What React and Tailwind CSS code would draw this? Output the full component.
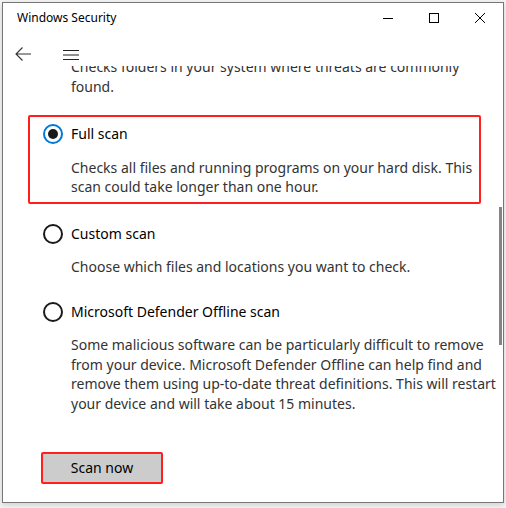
import React from "react";

const Radio = ({ checked }) => (
  <span
    className={
      checked
        ? "flex h-[20px] w-[20px] shrink-0 items-center justify-center rounded-full border-2 border-[#0078d7] bg-white"
        : "flex h-[20px] w-[20px] shrink-0 items-center justify-center rounded-full border-2 border-[#1a1a1a] bg-white"
    }
  >
    {checked && <span className="h-[10px] w-[10px] rounded-full bg-[#1a1a1a]" />}
  </span>
);

const Option = ({ checked, label, children }) => (
  <div>
    <div className="flex h-[20px] items-center gap-[8px]">
      <Radio checked={checked} />
      <span className="text-black">{label}</span>
    </div>
    <p className="mt-[13.5px] pl-[28px] whitespace-nowrap text-[#333]">{children}</p>
  </div>
);

export default function App() {
  return (
    <div
      className="h-[508px] w-[506px] bg-[#f4f4f4] px-[2px] pt-[2px] text-[14px] leading-[19.5px]"
      style={{ fontFamily: '"Segoe UI", "Noto Sans", sans-serif' }}
    >
      <div className="flex h-[501px] flex-col border border-[#767676] bg-white shadow-[0_2px_6px_rgba(0,0,0,0.15)]">
        {/* title bar */}
        <div className="flex h-[30px] items-center">
          <span className="pl-[14px] text-[12px] text-black">Windows Security</span>
          <div className="ml-auto flex h-full">
            <div className="flex w-[46px] items-center justify-center">
              <svg width="10" height="10" viewBox="0 0 10 10">
                <path d="M0 5.5H10" stroke="#000" strokeWidth="1" />
              </svg>
            </div>
            <div className="flex w-[46px] items-center justify-center">
              <svg width="10" height="10" viewBox="0 0 10 10">
                <rect x="0.5" y="0.5" width="9" height="9" fill="none" stroke="#000" strokeWidth="1" />
              </svg>
            </div>
            <div className="flex w-[46px] items-center justify-center">
              <svg width="10" height="10" viewBox="0 0 10 10">
                <path d="M0 0L10 10M10 0L0 10" stroke="#000" strokeWidth="1" />
              </svg>
            </div>
          </div>
        </div>

        {/* nav */}
        <div className="flex h-[33px] shrink-0 items-start gap-[32px] pl-[12px] pt-[14px]">
          <svg width="16" height="14" viewBox="0 0 16 14">
            <path d="M16 7H1M7.5 0.5L1 7L7.5 13.5" fill="none" stroke="#333" strokeWidth="1.1" />
          </svg>
          <svg width="16" height="12" viewBox="0 0 16 12" className="mt-[1px]">
            <path d="M0 2.5H16M0 7H16M0 11.5H16" stroke="#222" strokeWidth="1.1" />
          </svg>
        </div>

        {/* scrolled content */}
        <div className="relative flex-1 overflow-hidden">
          <div className="mt-[-9px] pl-[25px]">
            <p className="pl-[43px] whitespace-nowrap text-[#333]">
              Checks folders in your system where threats are commonly
              <br />
              found.
            </p>

            <div className="mt-[19px] ml-[0px] w-[453px] rounded-[2px] border-2 border-[#ff1f1f] pt-[7px] pb-[5px] pl-[13px]">
              <Option checked label="Full scan">
                Checks all files and running programs on your hard disk. This
                <br />
                scan could take longer than one hour.
              </Option>
            </div>

            <div className="mt-[20px] pl-[15px]">
              <Option label="Custom scan">Choose which files and locations you want to check.</Option>
            </div>

            <div className="mt-[25px] pl-[15px]">
              <Option label="Microsoft Defender Offline scan">
                Some malicious software can be particularly difficult to remove
                <br />
                from your device. Microsoft Defender Offline can help find and
                <br />
                remove them using up-to-date threat definitions. This will restart
                <br />
                your device and will take about 15 minutes.
              </Option>
            </div>

            <button className="mt-[39px] ml-[13px] flex h-[32px] w-[122px] items-center justify-center rounded-[2px] border-2 border-[#ff1f1f] bg-[#cccccc] text-black">
              Scan now
            </button>
          </div>

          {/* scrollbar thumb */}
          <div className="absolute right-[1px] top-[141px] h-[138px] w-[3px] bg-[#858585]" />
        </div>
      </div>
    </div>
  );
}
